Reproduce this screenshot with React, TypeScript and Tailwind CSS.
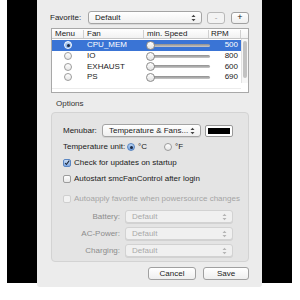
import React from "react";

const font = { fontFamily: '"Liberation Sans", Arial, sans-serif' };

function Arrows({ light }: { light?: boolean }) {
  return (
    <svg width="5" height="8" viewBox="0 0 5 8" className="shrink-0">
      <path d="M0.5 3 L2.5 0.8 L4.5 3 Z M0.5 5 L2.5 7.2 L4.5 5 Z" fill={light ? "#b5b5b5" : "#444"} />
    </svg>
  );
}

function Popup({ label, w, disabled }: { label: string; w: string; disabled?: boolean }) {
  return (
    <div
      className={`${w} h-[13px] flex items-center justify-between pl-[6px] pr-[5px] rounded-[3px] border shadow-[0_1px_0_rgba(0,0,0,0.08)] ${
        disabled ? "border-[#d2d2d2] bg-[#f0f0f0] text-[#a9a9a9]" : "border-[#a4a4a4] bg-gradient-to-b from-white to-[#f0f0f0] text-[#1a1a1a]"
      }`}
    >
      <span className="text-[8px] leading-none">{label}</span>
      <Arrows light={disabled} />
    </div>
  );
}

function Radio({ on, blue }: { on?: boolean; blue?: boolean }) {
  return (
    <div
      className={`w-[8px] h-[8px] rounded-full border flex items-center justify-center ${
        on ? "border-[#5a86c2] bg-gradient-to-b from-[#bcd6f4] to-[#6f9fe0]" : "border-[#9c9c9c] bg-gradient-to-b from-white to-[#e6e6e6]"
      } ${blue ? "border-white" : ""}`}
    >
      {on && <div className="w-[3px] h-[3px] rounded-full bg-[#1d2a44]" />}
    </div>
  );
}

function Check({ on, disabled }: { on?: boolean; disabled?: boolean }) {
  return (
    <div
      className={`w-[8px] h-[8px] rounded-[2px] border flex items-center justify-center ${
        on ? "border-[#5a86c2] bg-gradient-to-b from-[#c9ddf6] to-[#7fa8e2]" : disabled ? "border-[#cfcfcf] bg-[#f2f2f2]" : "border-[#9c9c9c] bg-gradient-to-b from-white to-[#e8e8e8]"
      }`}
    >
      {on && (
        <svg width="8" height="8" viewBox="0 0 8 8">
          <path d="M1.5 4 L3.2 6 L7 0.8" stroke="#1b2433" strokeWidth="1.4" fill="none" />
        </svg>
      )}
    </div>
  );
}

function Slider() {
  return (
    <div className="relative w-[62px] h-[9px] flex items-center">
      <div className="ml-[3px] w-[59px] h-[3px] rounded-full bg-gradient-to-b from-[#8e8e8e] to-[#c9c9c9]" />
      <div className="absolute left-[-2px] top-0 w-[9px] h-[9px] rounded-full border border-[#8a8a8a] bg-gradient-to-b from-white to-[#e2e2e2]" />
    </div>
  );
}

const fans = [
  { name: "CPU_MEM", rpm: "500", sel: true },
  { name: "IO", rpm: "800" },
  { name: "EXHAUST", rpm: "600" },
  { name: "PS", rpm: "690" },
];

export default function App() {
  return (
    <div className="w-[300px] h-[300px] bg-white overflow-hidden pt-[9px] pl-[7px]" style={font}>
      <div className="w-[285px] h-[283px] bg-black pl-[30px]">
        <div className="mt-[-9px] w-[225px] h-[287px] bg-[#ececec] rounded-b-[3px] text-[#1a1a1a] flex flex-col">
          {/* Favorite */}
          <div className="mt-[11px] h-[13px] flex items-center">
            <span className="ml-[13px] w-[38px] text-[8px] leading-none">Favorite:</span>
            <Popup label="Default" w="w-[114px]" />
            <div className="ml-[5px] w-[18px] h-[12px] rounded-[3px] border border-[#b8b8b8] bg-[#f3f3f3] flex items-center justify-center text-[8px] text-[#999] leading-none">
              -
            </div>
            <div className="ml-[6px] w-[18px] h-[12px] rounded-[3px] border border-[#a0a0a0] bg-gradient-to-b from-white to-[#eeeeee] flex items-center justify-center text-[9px] leading-none">
              +
            </div>
          </div>

          {/* Table */}
          <div className="mt-[4px] ml-[14px] w-[198px] h-[65px] border border-[#a8a8a8] bg-white flex flex-col">
            <div className="h-[10px] flex items-center border-b border-[#c6c6c6] bg-gradient-to-b from-white to-[#f1f1f1] text-[8px] leading-none">
              <div className="w-[32px] pl-[3px] border-r border-[#d0d0d0] h-[8px] flex items-center">Menu</div>
              <div className="w-[60px] pl-[3px] border-r border-[#d0d0d0] h-[8px] flex items-center">Fan</div>
              <div className="w-[65px] pl-[3px] border-r border-[#d0d0d0] h-[8px] flex items-center">min. Speed</div>
              <div className="w-[32px] pl-[2px] border-r border-[#d0d0d0] h-[8px] flex items-center">RPM</div>
            </div>
            <div className="flex">
              <div className="w-[189px] flex flex-col pt-[1px]">
                {fans.map((f) => (
                  <div
                    key={f.name}
                    className={`h-[10.7px] flex items-center text-[8px] leading-none ${f.sel ? "bg-[#3a74d5] text-white" : ""}`}
                  >
                    <div className="w-[32px] flex justify-center">
                      <Radio on={f.sel} blue={f.sel} />
                    </div>
                    <div className="w-[60px] pl-[3px]">{f.name}</div>
                    <div className="w-[65px] pl-[4px]">
                      <Slider />
                    </div>
                    <div className="w-[32px] text-right pr-[3px]">{f.rpm}</div>
                  </div>
                ))}
                <div className="mt-[5px] border-t border-[#ececec]" />
              </div>
              <div className="w-[8px] h-[44px] border-l border-[#e2e2e2] bg-[#f7f7f7] flex justify-center pt-[2px]">
                <div className="w-[4px] h-[37px] rounded-full bg-[#c2c2c2]" />
              </div>
            </div>
          </div>

          {/* Options */}
          <span className="mt-[7px] ml-[19px] text-[8px] leading-none text-[#333]">Options</span>
          <div className="mt-[4px] ml-[14px] w-[198px] h-[150px] rounded-[4px] border border-[#d3d3d3] bg-[#e4e4e4] flex flex-col text-[8px] leading-none">
            <div className="mt-[11px] h-[13px] flex items-center">
              <span className="ml-[11px] w-[39px]">Menubar:</span>
              <Popup label="Temperature & Fans..." w="w-[99px]" />
              <div className="ml-[4px] w-[28px] h-[12px] rounded-[2px] border border-[#9a9a9a] bg-white p-[2px]">
                <div className="w-full h-full bg-black" />
              </div>
            </div>
            <div className="mt-[4px] h-[12px] flex items-center">
              <span className="ml-[11px] w-[64px]">Temperature unit:</span>
              <Radio on />
              <span className="ml-[3px] w-[26px]">°C</span>
              <Radio />
              <span className="ml-[3px]">°F</span>
            </div>
            <div className="mt-[4px] h-[12px] flex items-center">
              <div className="ml-[11px]">
                <Check on />
              </div>
              <span className="ml-[3px]">Check for updates on startup</span>
            </div>
            <div className="mt-[4px] h-[12px] flex items-center">
              <div className="ml-[11px]">
                <Check />
              </div>
              <span className="ml-[3px]">Autostart smcFanControl after login</span>
            </div>
            <div className="mt-[8px] h-[12px] flex items-center text-[#a5a5a5]">
              <div className="ml-[11px]">
                <Check disabled />
              </div>
              <span className="ml-[3px]">Autoapply favorite when powersource changes</span>
            </div>
            {["Battery:", "AC-Power:", "Charging:"].map((l, i) => (
              <div key={l} className={`${i === 0 ? "mt-[5px]" : "mt-[4px]"} h-[13px] flex items-center`}>
                <span className="w-[68px] text-right text-[#8c8c8c]">{l}</span>
                <div className="ml-[5px]">
                  <Popup label="Default" w="w-[108px]" disabled />
                </div>
              </div>
            ))}
          </div>

          {/* Buttons */}
          <div className="mt-[5px] ml-[111px] flex gap-[7px]">
            <div className="w-[48px] h-[13px] rounded-[3px] border border-[#a0a0a0] bg-gradient-to-b from-white to-[#efefef] flex items-center justify-center text-[8px] leading-none">
              Cancel
            </div>
            <div className="w-[46px] h-[13px] rounded-[3px] border border-[#a0a0a0] bg-gradient-to-b from-white to-[#efefef] flex items-center justify-center text-[8px] leading-none">
              Save
            </div>
          </div>
        </div>
      </div>
    </div>
  );
}
